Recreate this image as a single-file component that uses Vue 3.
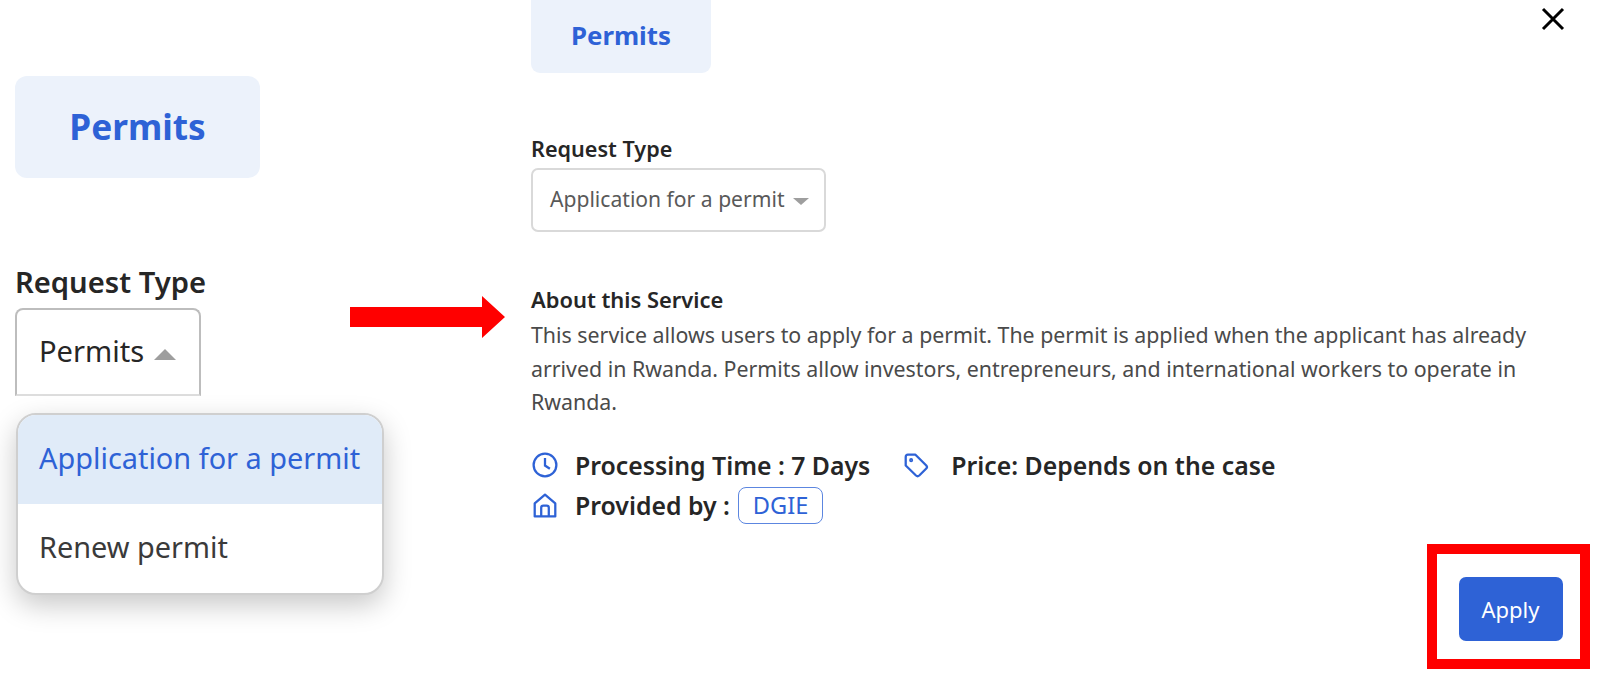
<template>
  <div class="page">
    <section class="before">
      <div class="tile tile-large">Permits</div>
      <div class="label label-large">Request Type</div>
      <div class="select-open">
        <span>Permits</span>
        <span class="caret caret-up"></span>
      </div>
      <ul class="menu">
        <li class="active">Application for a permit</li>
        <li>Renew permit</li>
      </ul>
    </section>

    <svg class="arrow" viewBox="0 0 155 42" width="155" height="42">
      <path d="M0 11H132V0L155 21L132 42V31H0Z" fill="#ff0000" />
    </svg>

    <section class="after">
      <svg class="close" viewBox="0 0 24 24" width="24" height="24">
        <path d="M2 2L22 22M22 2L2 22" fill="none" stroke="#000" stroke-width="3" />
      </svg>

      <div class="tile tile-small">Permits</div>
      <div class="label">Request Type</div>
      <div class="select">
        <span>Application for a permit</span>
        <span class="caret caret-down"></span>
      </div>

      <h4>About this Service</h4>
      <p>
        This service allows users to apply for a permit. The permit is applied when the applicant has already
        arrived in Rwanda. Permits allow investors, entrepreneurs, and international workers to operate in
        Rwanda.
      </p>

      <div class="meta">
        <svg class="icon" viewBox="0 0 24 24" width="26" height="26">
          <circle cx="12" cy="12" r="10.5" />
          <path d="M12 5.5V12.5L16.5 15.5" />
        </svg>
        <strong>Processing Time : 7 Days</strong>
        <svg class="icon icon-tag" viewBox="0 0 24 24" width="26" height="26">
          <path d="M2.5 4.5Q2.5 2.5 4.5 2.5H11.5L21.5 12.5Q22.8 14 21.5 15.2L15 21.7Q13.5 23 12 21.7L2.5 12.5Z" stroke-linejoin="round" />
          <circle cx="7.5" cy="7.5" r="0.8" />
        </svg>
        <strong>Price: Depends on the case</strong>
      </div>
      <div class="meta meta-provider">
        <svg class="icon" viewBox="0 0 24 24" width="26" height="26">
          <path d="M2.5 10.5L12 2.5L21.5 10.5V22.5H2.5Z" stroke-linejoin="round" />
          <path d="M8.5 22.5V14.5Q8.5 12.5 10.5 12.5H13.5Q15.5 12.5 15.5 14.5V22.5" />
        </svg>
        <strong>Provided by :</strong>
        <span class="badge">DGIE</span>
      </div>

      <div class="apply-box">
        <button class="apply">Apply</button>
      </div>
    </section>
  </div>
</template>

<script setup>
</script>

<style>
html, body {
  background: #fff;
}
</style>

<style scoped>
.page {
  position: relative;
  display: flex;
  width: 1600px;
  height: 677px;
  overflow: hidden;
  background: #fff;
  color: #262626;
  font-family: "Noto Sans", "Open Sans", sans-serif;
}

.before {
  width: 531px;
  padding: 76px 0 0 15px;
  box-sizing: border-box;
}

.after {
  position: relative;
  flex: 1;
  min-width: 0;
}

.tile {
  display: flex;
  align-items: center;
  justify-content: center;
  box-sizing: border-box;
  background: #ecf2fb;
  color: #2e62d6;
  font-weight: 700;
}

.tile-large {
  width: 245px;
  height: 102px;
  padding-bottom: 2px;
  border-radius: 12px;
  font-size: 35.2px;
}

.tile-small {
  width: 180px;
  height: 73px;
  padding-bottom: 3px;
  border-radius: 0 0 9px 9px;
  font-size: 25.8px;
}

.label {
  margin-top: 62px;
  font-size: 21.6px;
  line-height: 27px;
  font-weight: 600;
}

.label-large {
  margin-top: 86px;
  font-size: 29.2px;
  line-height: 36px;
}

.select-open {
  display: flex;
  align-items: flex-start;
  gap: 10px;
  width: 186px;
  height: 88px;
  margin-top: 8px;
  padding: 22px 0 0 22px;
  box-sizing: border-box;
  border: 2px solid #bdbdbd;
  border-bottom-color: #ddd;
  border-radius: 8px 8px 0 0;
  font-size: 29.1px;
  line-height: 38px;
}

.caret {
  width: 0;
  height: 0;
  border-left: 11px solid transparent;
  border-right: 11px solid transparent;
}

.caret-up {
  margin-top: 17px;
  border-bottom: 11px solid #9e9e9e;
}

.menu {
  width: 368px;
  height: 182px;
  margin: 17px 0 0 1px;
  padding: 0;
  box-sizing: border-box;
  overflow: hidden;
  list-style: none;
  background: #fff;
  border: 2px solid #cfcfcf;
  border-radius: 20px;
  box-shadow: 0 10px 28px rgba(0, 0, 0, 0.22);
  font-size: 28.9px;
}

.menu li {
  display: flex;
  align-items: center;
  height: 89px;
  padding: 0 0 4px 21px;
  box-sizing: border-box;
  color: #3a3a3a;
}

.menu .active {
  background: #e0ebf8;
  color: #2e62d6;
}

.arrow {
  position: absolute;
  left: 350px;
  top: 296px;
}

.close {
  position: absolute;
  right: 35px;
  top: 7px;
}

.select {
  display: flex;
  align-items: center;
  gap: 8px;
  width: 295px;
  height: 64px;
  margin-top: 6px;
  padding: 0 0 3px 17px;
  box-sizing: border-box;
  border: 2px solid #d9d9d9;
  border-radius: 7px;
  color: #595959;
  font-size: 21.1px;
}

.caret-down {
  border-left-width: 8px;
  border-right-width: 8px;
  border-top: 7px solid #9e9e9e;
  margin-top: 6px;
}

h4 {
  margin: 53px 0 0;
  font-size: 21.9px;
  line-height: 30px;
  font-weight: 600;
}

p {
  width: 1020px;
  margin: 3px 0 0;
  color: #4a4a4a;
  font-size: 21.35px;
  line-height: 33.5px;
}

.meta {
  display: flex;
  align-items: center;
  margin-top: 30px;
  font-size: 24.8px;
  line-height: 32px;
}

.meta-provider {
  margin-top: 6px;
}

.meta strong {
  font-weight: 600;
}

.icon {
  flex: none;
  margin: 0 17px 0 1px;
  fill: none;
  stroke: #2e62d6;
  stroke-width: 2.1;
}

.icon-tag {
  margin: 0 22px 0 33px;
}

.badge {
  margin-left: 8px;
  padding: 0 14px;
  height: 37px;
  line-height: 34px;
  box-sizing: border-box;
  border: 1.5px solid #5c86e0;
  border-radius: 8px;
  color: #2e62d6;
  font-size: 23.6px;
  font-weight: 400;
}

.apply-box {
  position: absolute;
  left: 896px;
  top: 544px;
  width: 163px;
  height: 125px;
  display: flex;
  align-items: center;
  justify-content: center;
  padding: 5px 0 0 4px;
  box-sizing: border-box;
  border: 10px solid #ff0000;
}

.apply {
  width: 104px;
  height: 64px;
  border: none;
  border-radius: 7px;
  background: #2e62d6;
  color: #fff;
  font-family: inherit;
  font-size: 22px;
}
</style>
